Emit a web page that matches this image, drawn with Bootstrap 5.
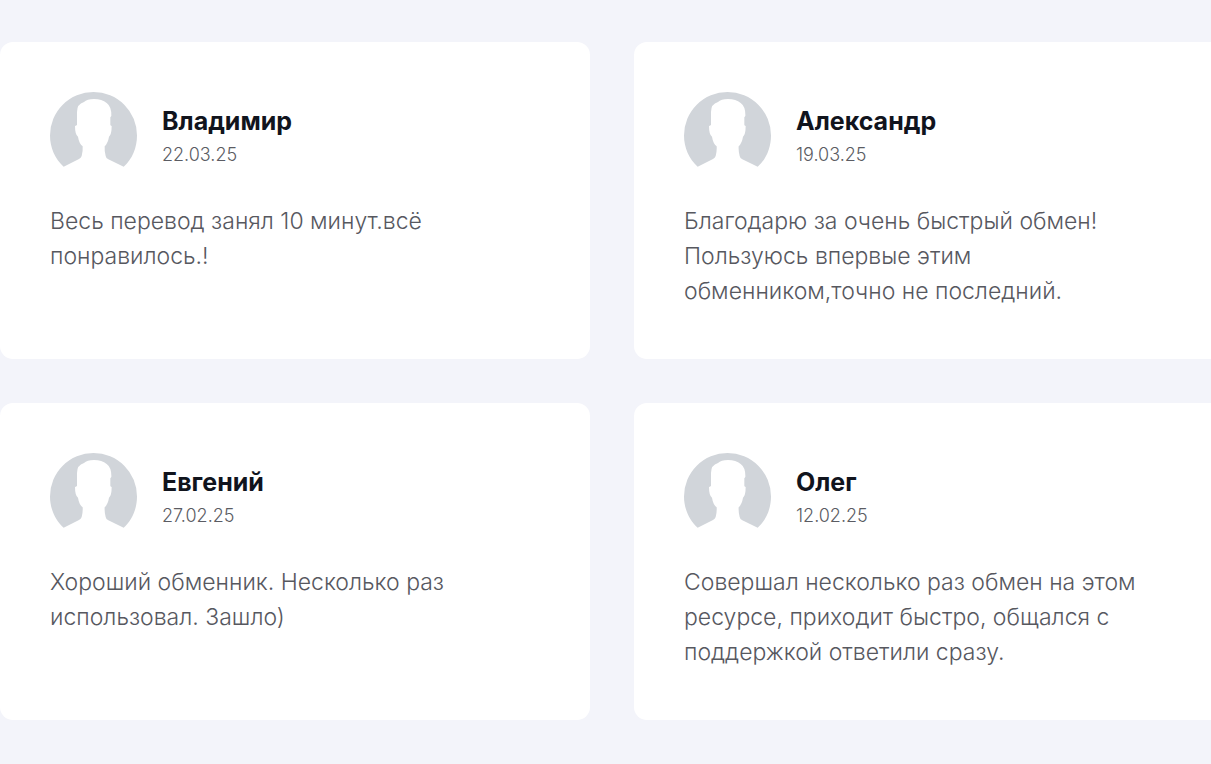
<!DOCTYPE html>
<html lang="ru">
<head>
<meta charset="utf-8">
<meta name="viewport" content="width=device-width, initial-scale=1">
<title>Отзывы</title>
<link href="https://cdn.jsdelivr.net/npm/bootstrap@5.3.0/dist/css/bootstrap.min.css" rel="stylesheet">
<style>
body { background: #f3f4fa; font-family: Inter, "Liberation Sans", sans-serif; }
.reviews { padding: 42px 0 44px; }
.reviews-grid { display: grid; grid-template-columns: 1fr 1fr; gap: 44px; margin-right: -13px; }
.review { border: 0; border-radius: 13px; padding: 50px; background: #fff; }
.review-head { gap: 25px; margin-bottom: 25px; }
.avatar { width: 87px; height: 87px; fill: #d1d5da; }
.review-name { font-size: 25px; line-height: 35px; font-weight: 700; color: #11141d; }
.review-date { font-size: 18px; line-height: 32px; font-weight: 300; color: #5b5c63; }
.review-text { font-size: 23px; line-height: 35px; font-weight: 300; color: #57585f; }
@media (max-width: 767px) { .reviews-grid { grid-template-columns: 1fr; margin-right: 0; } }
</style>
</head>
<body>
<svg class="d-none" aria-hidden="true">
  <symbol id="person" viewBox="30 36 261 261">
    <path d="M71 260C45 237 30 202 30 166.500A130.500 130.500 0 0 1 291 166.500C291 202 277 238 251 260L205 238Q198 235 197 228Q193 214 194 199Q204 189 207 170Q215 164 215 138Q211 137 211 134V112L214 108Q215 80 200 69Q186 57 162 57Q141 57 132 66Q111 72 111 96V134Q110 137 105 138Q105 164 114 170Q117 190 128 199Q129 214 125 228Q123 234 117 237Z"/>
  </symbol>
</svg>
<main class="reviews overflow-hidden">
  <div class="reviews-grid">
    <article class="card review">
      <header class="review-head d-flex align-items-center">
        <svg class="avatar flex-shrink-0" aria-hidden="true"><use href="#person"/></svg>
        <div class="pt-1"><h2 class="review-name m-0">Владимир</h2><time class="review-date d-block" datetime="2025-03-22">22.03.25</time></div>
      </header>
      <p class="review-text m-0">Весь перевод занял 10 минут.всё понравилось.!</p>
    </article>
    <article class="card review">
      <header class="review-head d-flex align-items-center">
        <svg class="avatar flex-shrink-0" aria-hidden="true"><use href="#person"/></svg>
        <div class="pt-1"><h2 class="review-name m-0">Александр</h2><time class="review-date d-block" datetime="2025-03-19">19.03.25</time></div>
      </header>
      <p class="review-text m-0">Благодарю за очень быстрый обмен! Пользуюсь впервые этим обменником,точно не последний.</p>
    </article>
    <article class="card review">
      <header class="review-head d-flex align-items-center">
        <svg class="avatar flex-shrink-0" aria-hidden="true"><use href="#person"/></svg>
        <div class="pt-1"><h2 class="review-name m-0">Евгений</h2><time class="review-date d-block" datetime="2025-02-27">27.02.25</time></div>
      </header>
      <p class="review-text m-0">Хороший обменник. Несколько раз использовал. Зашло)</p>
    </article>
    <article class="card review">
      <header class="review-head d-flex align-items-center">
        <svg class="avatar flex-shrink-0" aria-hidden="true"><use href="#person"/></svg>
        <div class="pt-1"><h2 class="review-name m-0">Олег</h2><time class="review-date d-block" datetime="2025-02-12">12.02.25</time></div>
      </header>
      <p class="review-text m-0">Совершал несколько раз обмен на этом ресурсе, приходит быстро, общался с поддержкой ответили сразу.</p>
    </article>
  </div>
</main>
<script src="https://cdn.jsdelivr.net/npm/bootstrap@5.3.0/dist/js/bootstrap.bundle.min.js"></script>
</body>
</html>
